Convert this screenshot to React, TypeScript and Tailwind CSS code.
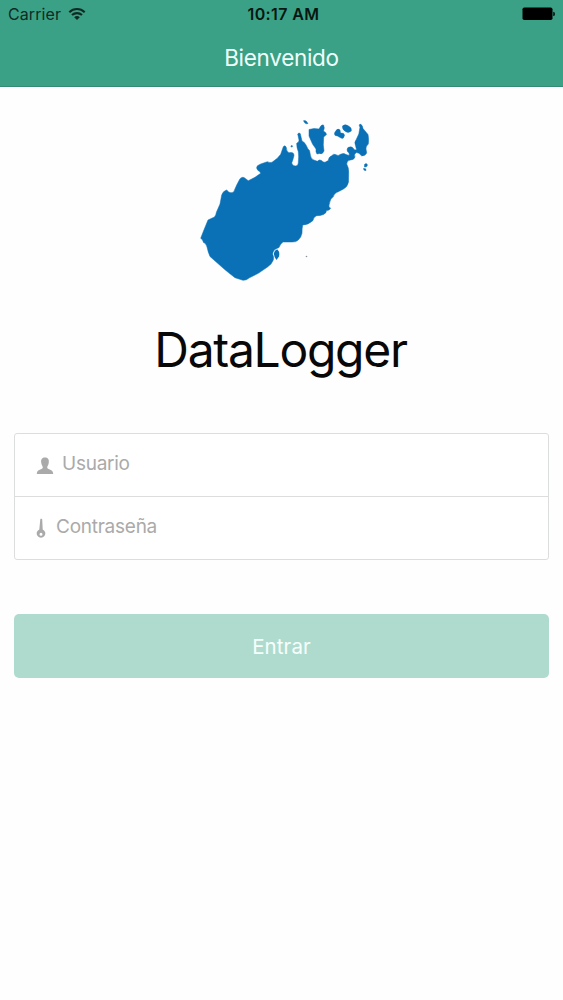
function WifiIcon() {
  return (
    <svg viewBox="0 0 18 14" className="h-[14px] w-[18px]" fill="none" stroke="#0e2b23" strokeWidth="2.1">
      <path d="M1.3 5.2C5.6 1 12.4 1 16.7 5.2" />
      <path d="M4 8.1C6.8 5.4 11.2 5.4 14 8.1" />
      <path d="M6.2 10.2C7.8 8.7 10.2 8.7 11.8 10.2L9 13Z" fill="#0e2b23" stroke="none" />
    </svg>
  );
}

function BatteryIcon() {
  return (
    <svg viewBox="0 0 34 14" className="h-[14px] w-[34px]" fill="#000">
      <rect x="0.5" y="0.5" width="30" height="12.5" rx="1.8" />
      <path d="M31.3 4.7C33.4 5 33.4 8.8 31.3 9.1Z" />
    </svg>
  );
}

function StatusBar() {
  return (
    <div className="grid h-7 grid-cols-3 items-center pl-2 pr-[7px] text-[16px] leading-none text-[#0e2b23]">
      <div className="flex items-center gap-[7px]">
        <span className="tracking-[0.1px]">Carrier</span>
        <WifiIcon />
      </div>
      <span className="pl-[3px] text-center font-semibold tracking-[0.4px] text-[#061712]">10:17 AM</span>
      <div className="flex justify-end">
        <BatteryIcon />
      </div>
    </div>
  );
}

function Logo() {
  return (
    <svg viewBox="190 110 190 180" className="h-[180px] w-[190px]" fill="#0a71b7" stroke="#0a71b7" strokeWidth="0.5">
      <path
        strokeLinejoin="round"
        d="M221.7 195Q223 191 226.7 190Q229 193 231 192.700Q234 193 234.500 190L236.700 185L240 178.700Q242 176.500 244 177.500L248.300 180.700L255 177.300L260.700 173.300Q260 171 258 170.500Q255.500 168 257.500 165.700L260.700 164L267.300 161.700Q270 163 272 162.300L277.300 158.300L280.700 154.300L283.300 146.700Q285.300 144.500 286.300 147.500Q286.500 152 289 152.700Q294 151.500 294 155.500Q293 160 291.700 163Q292.700 166.500 296 166Q298.500 165.500 298.300 162.700Q299 156 298.300 151.700Q296.500 147 296.700 143.300Q299.500 142 299 140L297.700 134Q299 132 300.300 133.700L302 141Q304.500 142 306 145L308 149Q310 150 310 153Q310.500 158 313 159.700L317.300 161.300Q319.500 159 321.500 160.500Q323 162.500 325 162.300L328.300 160.500Q328.500 157 331.700 155.700Q333.500 153.500 335.500 154.500Q338.500 156.500 340 154.500Q344 152.500 346 154.500L349 155.500Q350 153 347.500 151.500Q346.500 149 348 147.500Q351.500 146 353 148Q354.500 151 356.500 149.500L355.500 145.500Q354 142 356 140L358.800 134L360 127Q358.500 125.500 360 124Q362.500 124.500 363 128.500L368 134.500Q369 139 368.300 144Q365.500 146.500 366 149L366.700 153Q365 156.500 361.500 155.800Q359 152.500 356.500 152.500Q353.500 154 355 157Q354 160 350.500 160Q347 160 346.700 164Q349 168 348.700 173.300L348.500 182Q347.500 187 343.500 189L338.300 191.700Q334 193 333.300 196.700Q330 199 329.300 204Q328 207 330.700 208.300Q329 211 326.700 210.300Q326.500 213 323.500 214.500Q320 215.800 316.700 215.700Q313.500 217 313 220.500Q308 225 302.700 225Q302 228 302 233.300Q301 238 298.300 240Q296 242.500 291 242L283.300 242Q280.700 243 279 247.500Q272.500 249.500 272.700 254.300Q274 257 273.300 260Q272 264 267.500 267L258.300 273.300L249 278Q246.500 280.500 243 280.300L235 277.700Q227.500 272 223.300 268.300L210 256.500Q208 252 207 247Q206 243 203.500 242.500Q203 239.500 200.700 238.300L203.500 231L208 220Q210 219 214.500 217Q216 215 216.500 212L220 204Z"
      />
      <path d="M309 129.500L314 128.500L319 129Q321.500 124 323.500 125Q325 127.500 323.500 131Q326.500 132.500 326.500 134.500L323.700 137L323.300 145L324 151Q322.500 155 319.500 153.500L317 154Q315.500 152 316 149L312.500 144L309 136Z" />
      <path d="M336 130.500Q338 128 340 130L340.500 133Q344.500 132.500 344.500 135.500Q343.500 139.500 341 138L337.500 136Q334 136 334.500 133Z" />
      <path d="M342.500 126Q345 123.500 348.500 126Q352 127.500 351.300 131Q348.500 133.500 345.500 131.500Q342 129.500 342.500 126Z" />
      <path d="M303.500 120.700Q306 119.500 308 123.500Q306 124.500 304.500 122.500Z" />
      <path d="M364.500 164.500Q366.500 162.500 367.500 165Q367 167.500 364.500 167ZM363.500 168.500Q366.500 168 366 170.500Q363.500 171 363.500 168.500Z" />
      <path d="M277.500 249.500Q280 252 279 256.500L276.500 260Q273.700 257 274 253Q275 249.500 277.500 249.500Z" stroke="none" />
      <circle cx="291.700" cy="146.300" r="0.8" />
      <circle cx="306.500" cy="256.500" r="0.8" fill="#87929a" stroke="none" />
    </svg>
  );
}

function PersonIcon() {
  return (
    <svg viewBox="0 0 18 18" className="mt-0.5 h-[18px] w-[18px]" fill="#aaaaaa">
      <path d="M9 0.500C12.500 0.500 13.300 3 12.700 6C12.500 8.200 11.200 9.300 11.200 10.500C11.200 13 17.200 11.500 17.200 17H0.800C0.800 11.500 6.800 13 6.800 10.500C6.800 9.300 5.500 8.200 5.300 6C4.700 3 5.500 0.500 9 0.500Z" />
    </svg>
  );
}

function KeyIcon() {
  return (
    <svg viewBox="0 0 10 20" className="h-5 w-[10px]" fill="#aaaaaa">
      <path
        fillRule="evenodd"
        d="M4.300 1.200L5 0.500L6.200 1.200L6.700 11.500A4.300 4.300 0 1 1 3.300 11.500ZM5 14.800A1.500 1.500 0 1 0 5 17.800A1.500 1.500 0 1 0 5 14.800Z"
      />
    </svg>
  );
}

export default function App() {
  return (
    <div className="flex h-[1000px] w-[563px] flex-col overflow-hidden bg-[#fefefe] font-['Inter',sans-serif]">
      <header className="h-[87px] shrink-0 border-b border-[#348c75] bg-[#3ba186]">
        <StatusBar />
        <h1 className="pt-[13px] text-center text-[22.5px] leading-[34px] tracking-[-0.3px] text-[#f0fffa]">
          Bienvenido
        </h1>
      </header>

      <main className="flex flex-col px-[14px]">
        <div className="mt-[23px] flex justify-center pl-[7px]">
          <Logo />
        </div>
        <h2 className="mt-[30px] pr-[2px] text-center text-[48px] leading-[60px] tracking-[-1.3px] text-[#080808]">
          DataLogger
        </h2>

        <form className="flex flex-col">
          <div className="mt-[53px] flex h-[127px] flex-col rounded-[3px] border border-[#dcdedd] bg-white text-[19px] tracking-[-0.25px] text-[#aaaaaa]">
            <label className="flex h-[63px] items-center gap-[8px] border-b border-[#dcdedd] pl-[21px]">
              <PersonIcon />
              <span className="-mt-px">Usuario</span>
            </label>
            <label className="flex h-[62px] items-center gap-[10px] pl-[21px]">
              <KeyIcon />
              <span className="-mt-0.5">Contraseña</span>
            </label>
          </div>
          <button
            type="button"
            className="mt-[54px] h-16 rounded-[5px] bg-[#afdbce] pt-[2px] text-[20.5px] tracking-[0.1px] text-[#f6fffc]"
          >
            Entrar
          </button>
        </form>
      </main>
    </div>
  );
}
